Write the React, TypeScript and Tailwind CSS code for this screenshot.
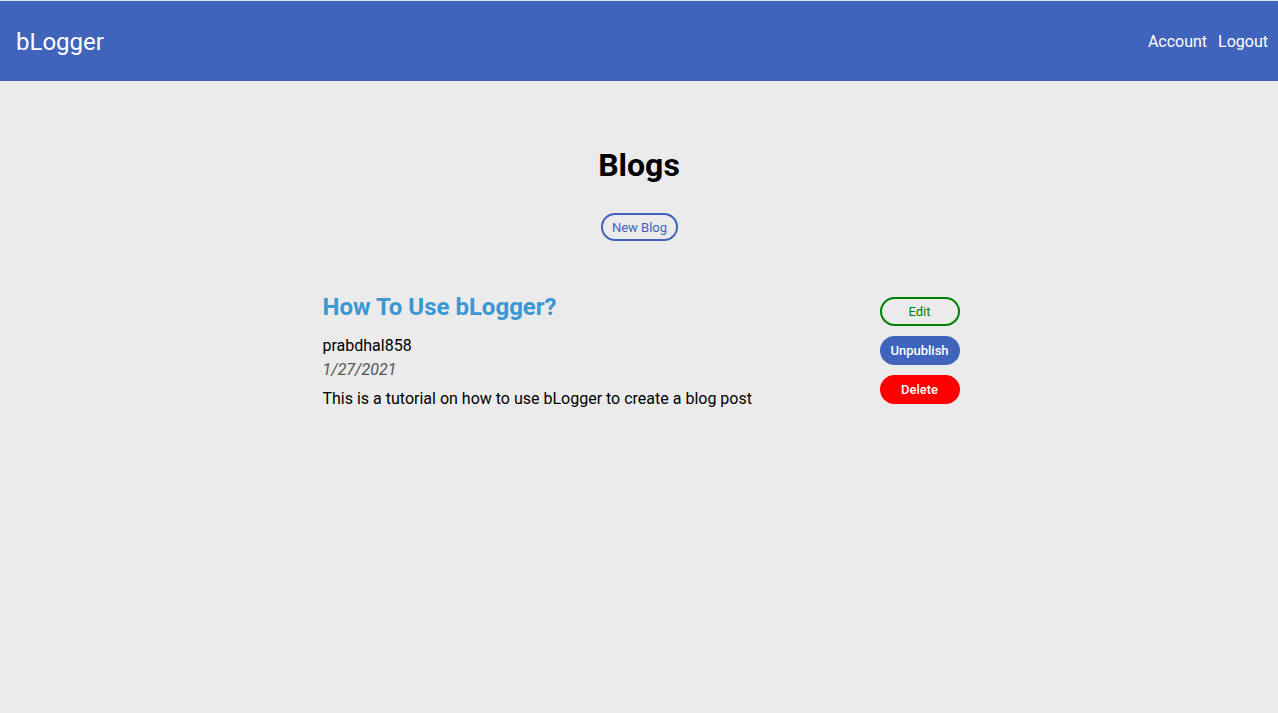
import React from 'react';

export default function App() {
  return (
    <div className="min-h-[713px] bg-[#ebebeb] font-['Roboto',sans-serif] border-t border-[#e6e6e6]">
      {/* Navbar */}
      <nav className="h-[80px] bg-[#4063bc] flex items-center justify-between pl-4 pr-[10px] pt-[2px]">
        <span className="text-white text-[24px]">bLogger</span>
        <div className="flex items-center gap-[11px] text-white text-[16px]">
          <a>Account</a>
          <a>Logout</a>
        </div>
      </nav>

      <main className="flex flex-col items-center">
        <h1 className="mt-[65px] text-[32px] font-bold text-black leading-[38px]">Blogs</h1>
        <button className="mt-[29px] ml-[1px] h-[28px] w-[77px] rounded-full border-2 border-[#4063bc] text-[#4063bc] text-[13px] leading-none">
          New Blog
        </button>

        <div className="mt-[51px] w-[641px] pl-[4px] flex justify-between">
          <div className="flex flex-col">
            <h2 className="text-[24px] font-bold text-[#3a97d4] leading-[30px]">How To Use bLogger?</h2>
            <p className="mt-[14px] text-[16px] text-black leading-[20px]">prabdhal858</p>
            <p className="mt-[4px] text-[16px] italic text-[#555] leading-[20px]">1/27/2021</p>
            <p className="mt-[9px] text-[16px] text-black leading-[20px]">This is a tutorial on how to use bLogger to create a blog post</p>
          </div>
          <div className="flex flex-col gap-[10px] pt-[5px]">
            <button className="w-[80px] h-[29px] rounded-full border-2 border-[#008000] text-[#008000] text-[13px]">Edit</button>
            <button className="w-[80px] h-[29px] rounded-full bg-[#4063bc] text-white text-[13px] font-medium">Unpublish</button>
            <button className="w-[80px] h-[29px] rounded-full bg-[#ff0000] text-white text-[13px] font-medium">Delete</button>
          </div>
        </div>
      </main>
    </div>
  );
}
